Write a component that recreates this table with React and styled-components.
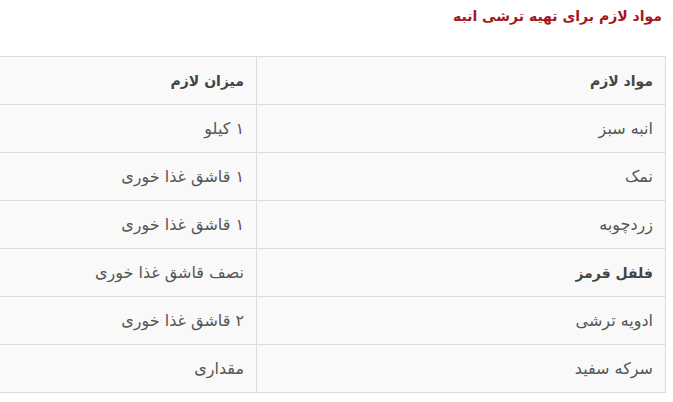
import React from 'react'
import styled, { createGlobalStyle } from 'styled-components'

const GlobalStyle = createGlobalStyle`
  body {
    margin: 0;
    background: #fff;
    font-family: "DejaVu Sans", "Noto Sans", sans-serif;
    direction: rtl;
  }
`

const Page = styled.div`
  margin-right: 7px;
  overflow: hidden;
`

const Title = styled.h3`
  margin: 0;
  padding: 8px 4px 0 0;
  height: 56px;
  box-sizing: border-box;
  font-size: 14px;
  font-weight: bold;
  color: #a3171c;
`

const Table = styled.table`
  width: 720px;
  border-collapse: collapse;
  background: #f9f9f9;
  border: 1px solid #dcdcdc;
`

const Cell = styled.td`
  height: 47px;
  padding: 0 12px 0 10px;
  border: 1px solid #dcdcdc;
  text-align: right;
  font-size: ${p => (p.head || p.strong ? '14px' : '16px')};
  color: ${p => (p.head || p.strong ? '#444' : '#555')};
  font-weight: ${p => (p.head || p.strong ? 'bold' : 'normal')};
  width: ${p => p.w || 'auto'};
`

const rows = [
  ['انبه سبز', '۱ کیلو'],
  ['نمک', '۱ قاشق غذا خوری'],
  ['زردچوبه', '۱ قاشق غذا خوری'],
  ['فلفل قرمز', 'نصف قاشق غذا خوری', true],
  ['ادویه ترشی', '۲ قاشق غذا خوری'],
  ['سرکه سفید', 'مقداری'],
]

const App = () => {
  return (
    <>
      <GlobalStyle />
      <Page>
        <Title>مواد لازم برای تهیه ترشی انبه</Title>
        <Table>
          <tbody>
            <tr>
              <Cell head w="386px">مواد لازم</Cell>
              <Cell head>میزان لازم</Cell>
            </tr>
            {rows.map(r => (
              <tr key={r[0]}>
                <Cell strong={r[2]}>{r[0]}</Cell>
                <Cell>{r[1]}</Cell>
              </tr>
            ))}
          </tbody>
        </Table>
      </Page>
    </>
  )
}

export default App
